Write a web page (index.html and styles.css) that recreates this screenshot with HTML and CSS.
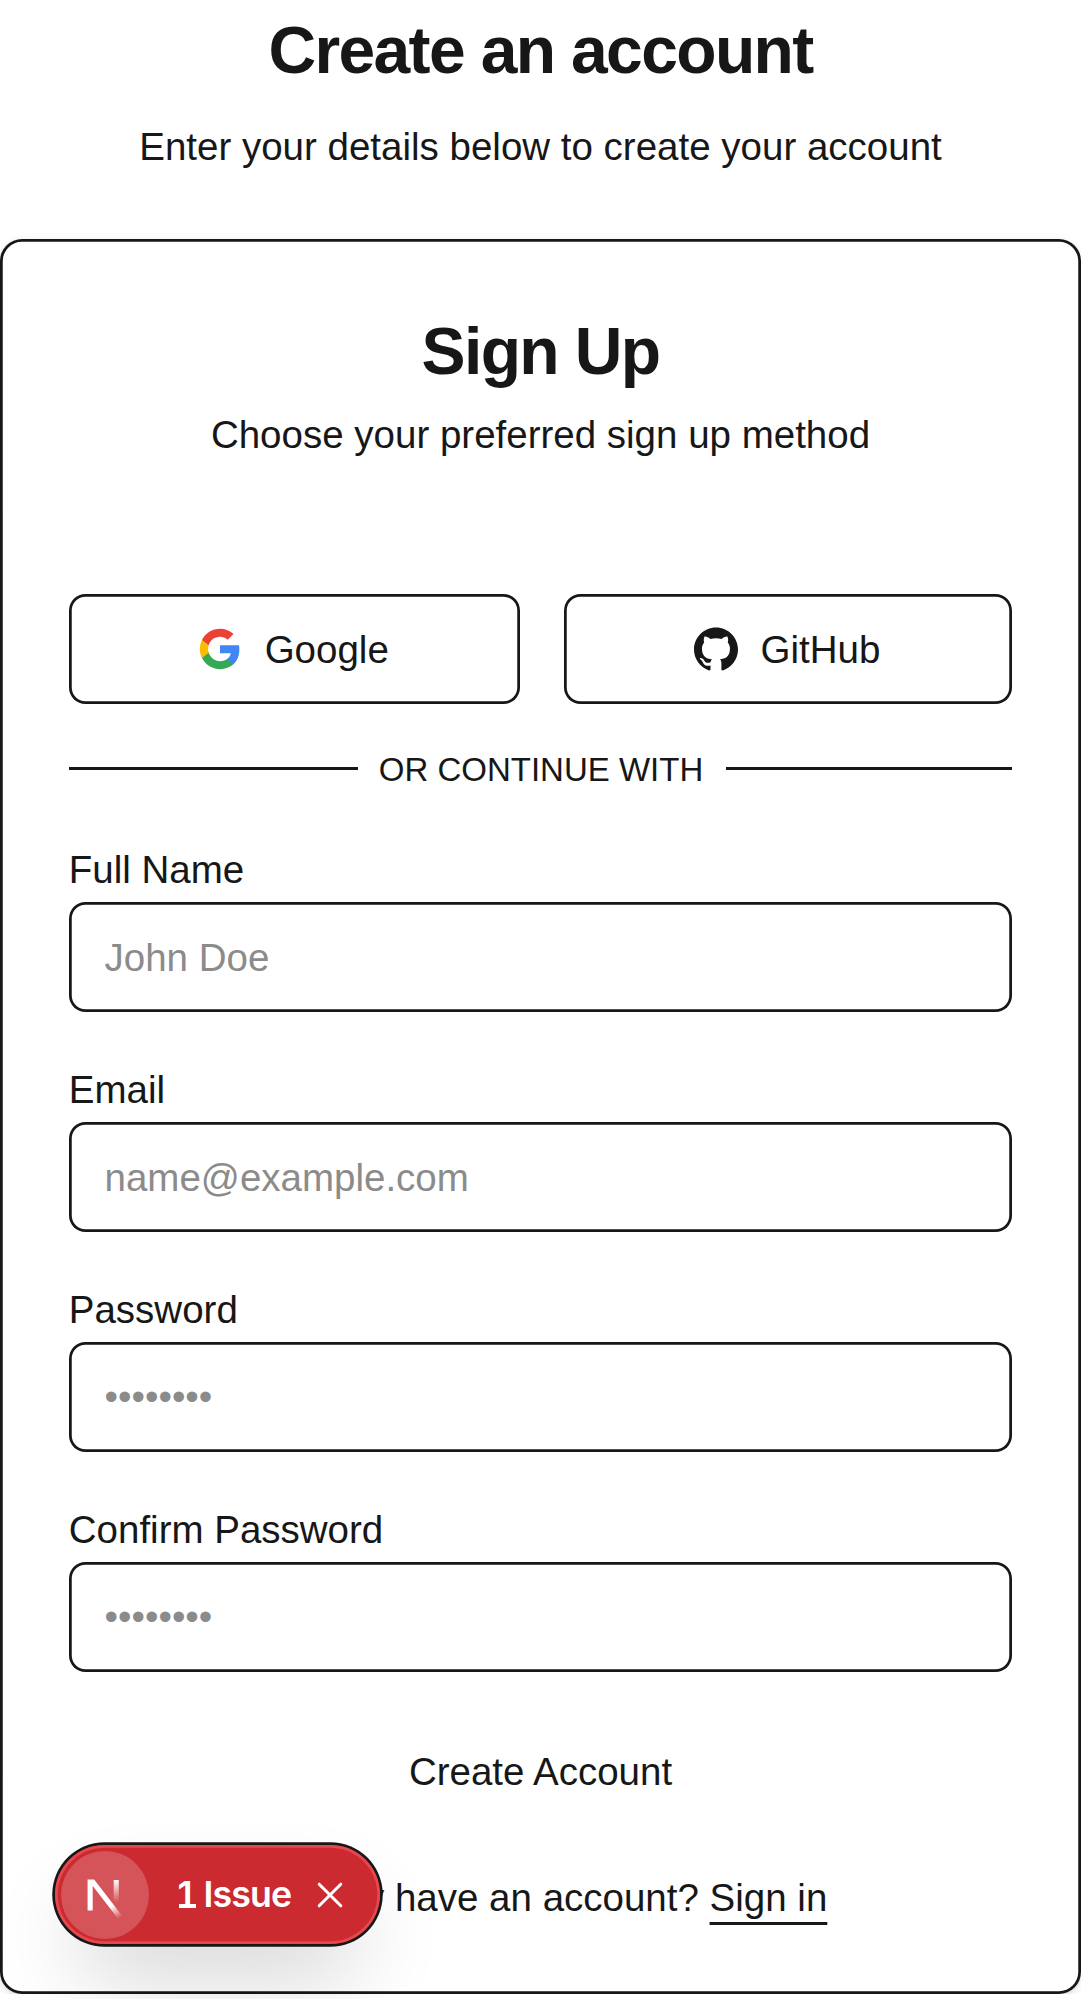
FILE: index.html
```html
<!DOCTYPE html>
<html lang="en">
<head>
<meta charset="utf-8">
<title>Create an account</title>
<link rel="stylesheet" href="styles.css">
</head>
<body>
<main class="page">
  <header class="intro">
    <h1 class="heading">Create an account</h1>
    <p class="text">Enter your details below to create your account</p>
  </header>
  <section class="card">
    <div class="card-header">
      <h2 class="heading">Sign Up</h2>
      <p class="text">Choose your preferred sign up method</p>
    </div>
    <div class="providers">
      <button class="box provider" type="button">
        <svg class="provider-icon" viewBox="0 0 24 24">
          <path fill="#4285F4" d="M22.56 12.25c0-.78-.07-1.53-.2-2.25H12v4.26h5.92c-.26 1.37-1.04 2.53-2.21 3.31v2.77h3.57c2.08-1.92 3.28-4.74 3.28-8.09z"/>
          <path fill="#34A853" d="M12 23c2.97 0 5.46-.98 7.28-2.66l-3.57-2.77c-.98.66-2.23 1.06-3.71 1.06-2.86 0-5.29-1.93-6.16-4.53H2.18v2.84C3.99 20.53 7.7 23 12 23z"/>
          <path fill="#FBBC05" d="M5.84 14.09c-.22-.66-.35-1.36-.35-2.09s.13-1.43.35-2.09V7.07H2.18C1.43 8.55 1 10.22 1 12s.43 3.45 1.18 4.93l3.66-2.84z"/>
          <path fill="#EA4335" d="M12 5.38c1.62 0 3.06.56 4.21 1.64l3.15-3.15C17.45 2.09 14.97 1 12 1 7.7 1 3.99 3.47 2.18 7.07l3.66 2.84c.87-2.6 3.3-4.53 6.16-4.53z"/>
        </svg>
        Google
      </button>
      <button class="box provider" type="button">
        <svg class="provider-icon" viewBox="0 0 24 24" fill="currentColor">
          <path d="M12 .297c-6.63 0-12 5.373-12 12 0 5.303 3.438 9.8 8.205 11.385.6.113.82-.258.82-.577 0-.285-.01-1.04-.015-2.04-3.338.724-4.042-1.61-4.042-1.61C4.422 18.07 3.633 17.7 3.633 17.7c-1.087-.744.084-.729.084-.729 1.205.084 1.838 1.236 1.838 1.236 1.07 1.835 2.809 1.305 3.495.998.108-.776.417-1.305.76-1.605-2.665-.3-5.466-1.332-5.466-5.93 0-1.31.465-2.38 1.235-3.22-.135-.303-.54-1.523.105-3.176 0 0 1.005-.322 3.3 1.23.96-.267 1.98-.399 3-.405 1.02.006 2.04.138 3 .405 2.28-1.552 3.285-1.23 3.285-1.23.645 1.653.24 2.873.12 3.176.765.84 1.23 1.91 1.23 3.22 0 4.61-2.805 5.625-5.475 5.92.42.36.81 1.096.81 2.22 0 1.606-.015 2.896-.015 3.286 0 .315.21.69.825.57C20.565 22.092 24 17.592 24 12.297c0-6.627-5.373-12-12-12"/>
        </svg>
        GitHub
      </button>
    </div>
    <div class="divider">Or continue with</div>
    <form class="form">
      <label class="field">Full Name
        <input class="box input" type="text" placeholder="John Doe">
      </label>
      <label class="field">Email
        <input class="box input" type="email" placeholder="name@example.com">
      </label>
      <label class="field">Password
        <input class="box input" type="password" placeholder="••••••••">
      </label>
      <label class="field">Confirm Password
        <input class="box input" type="password" placeholder="••••••••">
      </label>
      <button class="submit" type="button">Create Account</button>
    </form>
    <p class="text">Already have an account? <a class="link">Sign in</a></p>
  </section>
</main>
<aside class="badge">
  <span class="badge-logo">
    <svg class="badge-mark" viewBox="0 0 32 32" fill="none">
      <defs>
        <linearGradient id="diagonal" x1="9.956" y1="11.123" x2="15.478" y2="17.967" gradientUnits="userSpaceOnUse">
          <stop stop-color="#fff"/><stop offset="0.604" stop-color="#fff" stop-opacity="0"/>
        </linearGradient>
        <linearGradient id="stem" x1="11.822" y1="1.4" x2="11.791" y2="9.625" gradientUnits="userSpaceOnUse">
          <stop stop-color="#fff"/><stop offset="1" stop-color="#fff" stop-opacity="0"/>
        </linearGradient>
        <clipPath id="mark-clip"><rect x="0" y="1.4" width="16" height="16"/></clipPath>
      </defs>
      <g transform="translate(8.26 9)" clip-path="url(#mark-clip)" stroke-width="1.86">
        <path d="M13.3 15.2 L2.34 1 V12.6" stroke="url(#diagonal)"/>
        <path d="M11.825 1.5 V13.1" stroke="url(#stem)"/>
      </g>
    </svg>
  </span>
  <span class="badge-text"><span class="count">1</span><span>Issue</span></span>
  <svg class="badge-close" viewBox="0 0 26 26" stroke="#fff" stroke-width="3" stroke-linecap="round"><path d="M2.2 2.2 23.8 23.8M23.8 2.2 2.2 23.8"/></svg>
</aside>
</body>
</html>
```
FILE: styles.css
```css
* { box-sizing: border-box; }
body {
  margin: 0;
  background: #fff;
  color: #171717;
  font: 38.5px/55px "Liberation Sans", Arial, sans-serif;
  overflow: hidden;
}
h1, h2, p { margin: 0; }
button, input { font: inherit; color: inherit; }

.page { padding-top: 6px; }
.intro {
  display: flex;
  flex-direction: column;
  gap: 25px;
  text-align: center;
}
.heading {
  font-size: 66px;
  line-height: 88px;
  font-weight: 700;
  letter-spacing: -1.65px;
}
.card {
  margin-top: 65.25px;
  height: 1754.5px;
  padding: 67.5px 68.75px 0;
  border-radius: 22px;
  background: #fff;
  box-shadow: inset 0 0 0 2.75px #171717, 0 2.75px 8.25px rgba(0, 0, 0, .1), 0 2.75px 5.5px -2.75px rgba(0, 0, 0, .1);
  text-align: center;
}
.card-header { display: flex; flex-direction: column; gap: 12px; }

.box {
  height: 110px;
  border: 0;
  border-radius: 16.5px;
  background: #fff;
  box-shadow: inset 0 0 0 2.75px #171717;
}
.providers {
  display: grid;
  grid-template-columns: 451px 1fr;
  gap: 44px;
  margin-top: 132px;
}
.provider {
  display: flex;
  align-items: center;
  justify-content: center;
  gap: 23px;
  padding: 1px 2px 0 0;
}
.provider-icon { width: 44px; height: 44px; margin-top: -1px; }

.divider {
  display: flex;
  align-items: center;
  gap: 22px;
  margin-top: 43px;
  padding-top: 1px;
  font-size: 33px;
  line-height: 44px;
  text-transform: uppercase;
}
.divider::before, .divider::after {
  content: "";
  flex: 1;
  height: 2.75px;
  margin-top: -3px;
  background: #171717;
}
.divider::before { flex: 0 0 289px; margin-right: -1px; }
.divider::after { margin-left: 1px; }

.form {
  display: flex;
  flex-direction: column;
  gap: 58px;
  margin-top: 58px;
}
.field {
  display: flex;
  flex-direction: column;
  gap: 13px;
  line-height: 39px;
  text-align: left;
}
.input {
  width: 100%;
  padding: 2px 35.75px 0;
  line-height: 55px;
  outline: 0;
}
.input[type="password"] { padding-top: 1px; }
.input::placeholder { color: #8b8b8b; opacity: 1; }
.submit {
  height: 110px;
  margin-top: -13px;
  padding: 0;
  border: 0;
  background: none;
}
.form + .text { margin-top: 43px; }
.link { text-decoration: underline; text-decoration-thickness: 2.75px; text-underline-offset: 11px; text-decoration-skip-ink: none; }

.badge {
  position: absolute;
  left: 55px;
  top: 1845px;
  display: flex;
  align-items: center;
  width: 324.5px;
  height: 99px;
  padding-left: 5.5px;
  border-radius: 50px;
  background: #ca2a30;
  color: #fff;
  box-shadow: inset 0 0 0 2.75px #e5484d, 0 0 0 2.75px #171717, 0 44px 88px -22px rgba(0, 0, 0, .24);
}
.badge-logo {
  width: 88px;
  height: 88px;
  border-radius: 50%;
  background: #d55459;
}
.badge-mark { display: block; }
.badge-text {
  display: flex;
  width: 114px;
  margin-left: 29px;
  font: 600 35.75px/55px Inter, sans-serif;
  letter-spacing: -.9px;
  white-space: nowrap;
}
.count { position: relative; width: 26px; }
/* foot of the figure */
.count::after {
  content: "";
  position: absolute;
  left: 1.5px;
  bottom: 14.5px;
  width: 17px;
  height: 4px;
  background: #fff;
}
.badge-close { width: 26px; height: 26px; margin-left: 25.5px; }
```
